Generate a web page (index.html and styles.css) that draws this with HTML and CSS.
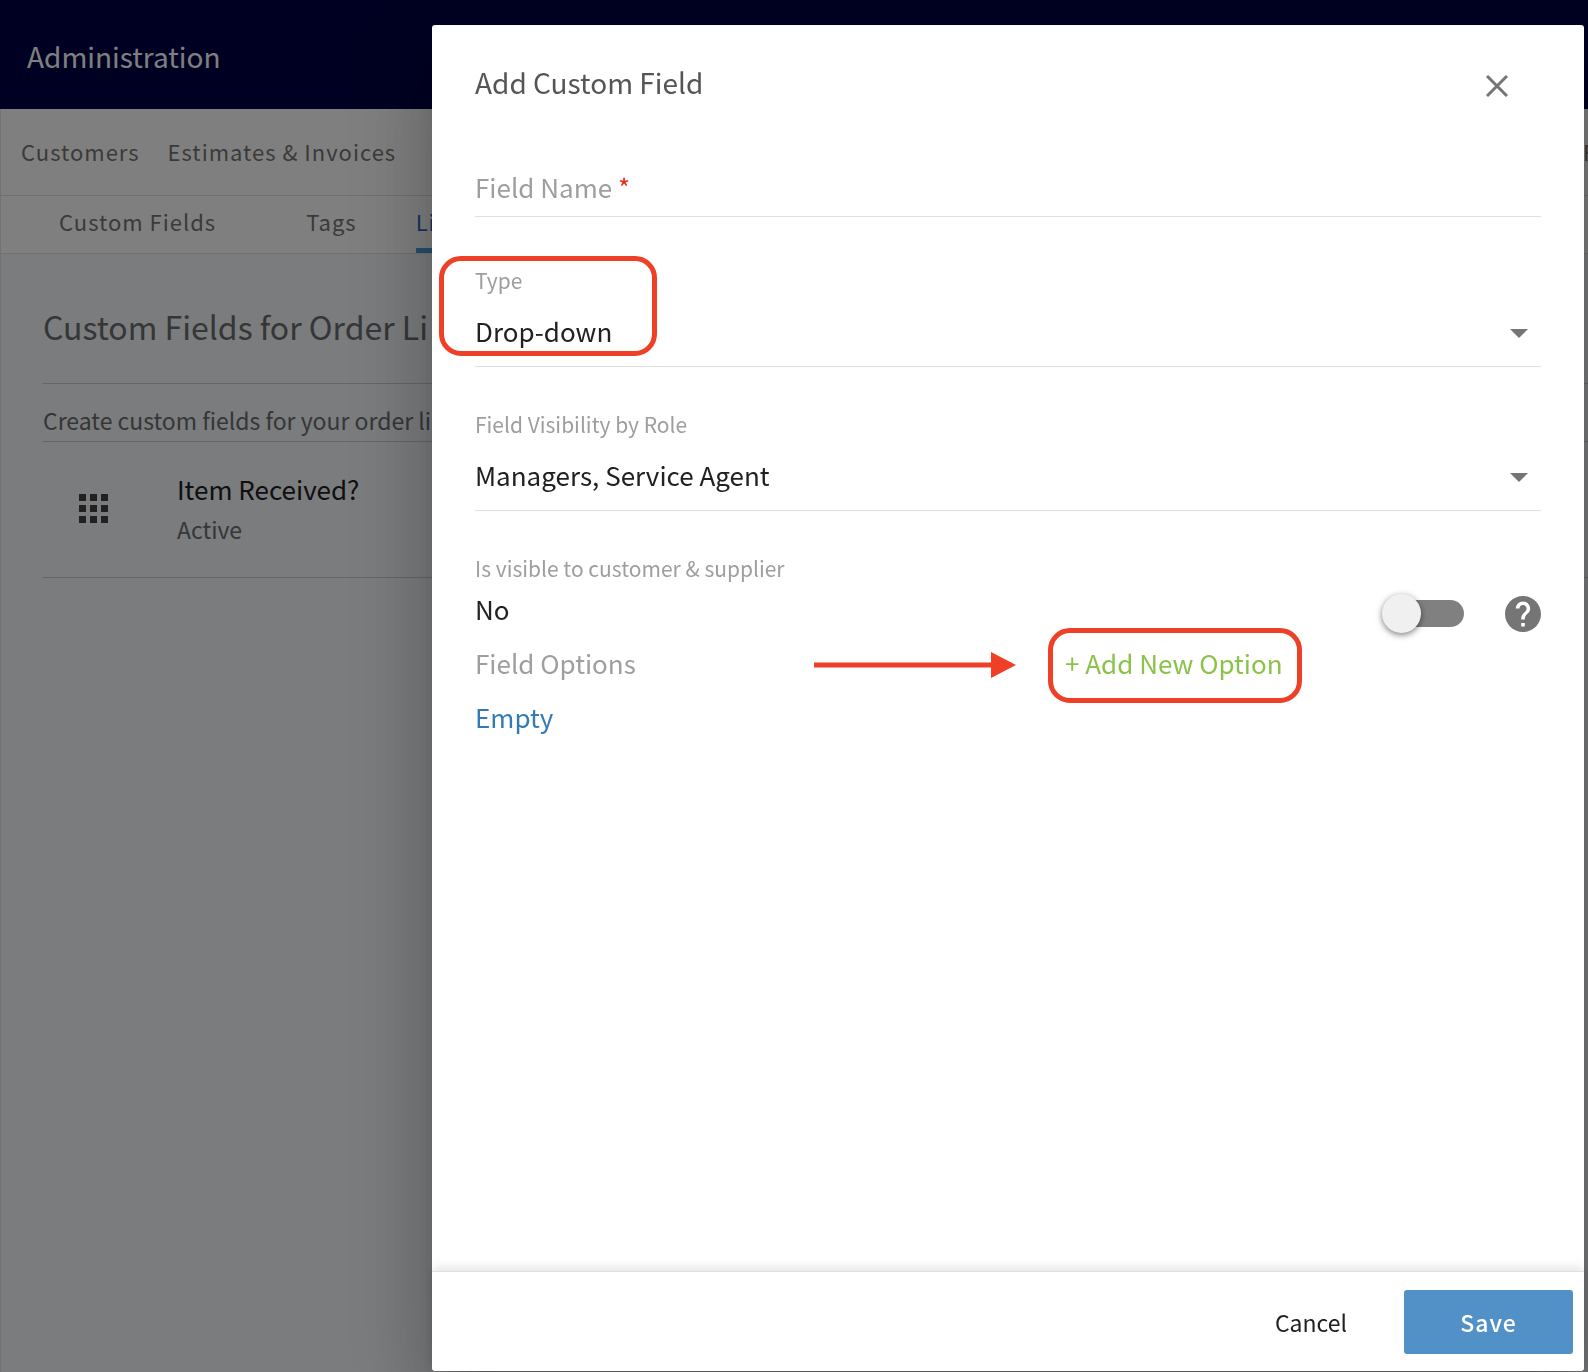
FILE: index.html
```
<!DOCTYPE html>
<html lang="en">
<head>
  <meta charset="UTF-8" />
  <title>Administration</title>
  <link rel="stylesheet" href="styles.css">
</head>
<body>

  <div class="page">
    <header class="topbar">
      <h1>Administration</h1>
    </header>

    <nav class="nav">
      <a href="#">Customers</a>
      <a href="#">Estimates &amp; Invoices</a>
      <a href="#" class="nav-last">F</a>
    </nav>

    <nav class="subnav">
      <a href="#">Custom Fields</a>
      <a href="#">Tags</a>
      <a href="#" class="active">Li</a>
    </nav>

    <main class="content">
      <h2>Custom Fields for Order Li</h2>
      <p class="intro">Create custom fields for your order li</p>
      <div class="item">
        <svg class="grip" viewBox="0 0 29 29" width="29" height="29">
          <path d="M0 0h7v7H0zM11 0h7v7h-7zM22 0h7v7h-7zM0 11h7v7H0zM11 11h7v7h-7zM22 11h7v7h-7zM0 22h7v7H0zM11 22h7v7h-7zM22 22h7v7h-7z" />
        </svg>
        <div>
          <div class="item-name">Item Received?</div>
          <div class="item-status">Active</div>
        </div>
      </div>
    </main>
  </div>

  <!-- Add custom field dialog -->
  <div class="backdrop">
    <form class="dialog" role="dialog" aria-labelledby="dialog-title">
      <div class="dialog-body">
        <div class="dialog-header">
          <h2 id="dialog-title">Add Custom Field</h2>
          <button type="button" class="close" aria-label="Close">
            <svg viewBox="0 0 22 22" width="22" height="22">
              <path d="M1 1l20 20M21 1L1 21" />
            </svg>
          </button>
        </div>

        <div class="field field-text">
          <label for="field-name">Field Name <span class="required">*</span></label>
          <input type="text" id="field-name" required>
        </div>

        <div class="field">
          <label for="field-type">Type</label>
          <select id="field-type">
            <option>Drop-down</option>
          </select>
          <svg class="caret" viewBox="0 0 18 9" width="18" height="9"><path d="M0 0h18L9 9z" /></svg>
          <span class="mark mark-type"></span>
        </div>

        <div class="field">
          <label for="field-roles">Field Visibility by Role</label>
          <select id="field-roles">
            <option>Managers, Service Agent</option>
          </select>
          <svg class="caret" viewBox="0 0 18 9" width="18" height="9"><path d="M0 0h18L9 9z" /></svg>
        </div>

        <div class="visible">
          <label for="field-visible">Is visible to customer &amp; supplier</label>
          <div class="visible-row">
            <span>No</span>
            <div class="visible-controls">
              <input type="checkbox" class="toggle" id="field-visible">
              <button type="button" class="help" aria-label="Help">
                <svg viewBox="2 2 20 20" width="36" height="36">
                  <path d="M12 2C6.48 2 2 6.48 2 12s4.48 10 10 10 10-4.480 10-10S17.520 2 12 2zm1 17h-2v-2h2v2zm2.070-7.750l-.9.920C13.450 12.900 13 13.500 13 15h-2v-.5c0-1.100.45-2.100 1.170-2.830l1.240-1.260c.37-.36.59-.86.59-1.410 0-1.100-.9-2-2-2s-2 .9-2 2H8c0-2.210 1.790-4 4-4s4 1.790 4 4c0 .88-.36 1.680-.93 2.250z" />
                </svg>
              </button>
            </div>
          </div>
        </div>

        <div class="options">
          <span class="options-label">Field Options</span>
          <div class="options-add">
            <svg class="arrow" viewBox="0 0 202 26" width="202" height="26">
              <path d="M0 10.500h178v5H0z" />
              <path d="M177 0l25 13-25 13z" />
            </svg>
            <button type="button" class="add">+ Add New Option</button>
            <span class="mark mark-add"></span>
          </div>
        </div>
        <a href="#" class="empty">Empty</a>
      </div>

      <div class="dialog-footer">
        <button type="button" class="cancel">Cancel</button>
        <button type="submit" class="save">Save</button>
      </div>
    </form>
  </div>

</body>
</html>
```
FILE: styles.css
```
* {
  box-sizing: border-box;
}
body {
  margin: 0;
  font-family: "Noto Sans CJK SC", "Open Sans", sans-serif;
  font-size: 26px;
  line-height: 40px;
  color: #212121;
  overflow: hidden;
}
h1, h2, p {
  margin: 0;
  font-weight: 400;
}
a {
  color: inherit;
  text-decoration: none;
}
button, input, select {
  font: inherit;
  color: inherit;
  border: 0;
  padding: 0;
  margin: 0;
  background: none;
}
button {
  cursor: pointer;
}

/* Page behind the dialog */
.page {
  display: flex;
  flex-direction: column;
  min-height: 100vh;
  background-color: #f5f8fa;
}
.topbar {
  height: 109px;
  padding: 36px 27px;
  background-color: #000044;
}
.topbar h1 {
  font-size: 28px;
  color: #fff;
}
.nav, .subnav {
  display: flex;
  background-color: #fff;
  border-bottom: 1px solid #dfe2e4;
  border-left: 1px solid #e4e6e8;
  font-size: 22px;
  letter-spacing: 1px;
  white-space: nowrap;
  color: #757575;
}
.nav {
  height: 87px;
  gap: 28px;
  padding: 22px 0 0 20px;
}
.nav-last {
  width: 5px;
  margin-left: auto;
}
.subnav {
  height: 58px;
  padding: 5px 0 0 58px;
}
.subnav a {
  margin-right: 90px;
}
.subnav a + a {
  margin-right: 59px;
}
.subnav .active {
  width: 160px;
  margin: 0;
  border-bottom: 5px solid #4a9fd8;
  color: #1f6fc0;
}
.content {
  flex: 1;
  padding: 42px 0 0 42px;
  border-left: 1px solid #e4e6e8;
  color: #6b6d6f;
  white-space: nowrap;
}
.content h2 {
  height: 88px;
  font-size: 32px;
  line-height: 60px;
  border-bottom: 1px solid #c9cccf;
}
.intro {
  height: 58px;
  padding-top: 16px;
  font-size: 23px;
  border-bottom: 1px solid #c9cccf;
}
.item {
  display: flex;
  align-items: center;
  gap: 69px;
  height: 136px;
  padding: 0 0 2px 36px;
  border-bottom: 1px solid #c9cccf;
}
.grip {
  fill: #424242;
}
.item-name {
  color: #212121;
}
.item-status {
  font-size: 23px;
}

/* Dialog */
.backdrop {
  position: fixed;
  inset: 0;
  display: flex;
  padding: 25px 4px 1px 432px;
  background-color: rgba(0,0,0,0.5);
}
.dialog {
  flex: 1;
  display: flex;
  flex-direction: column;
  background-color: #fff;
  border-radius: 3px;
  box-shadow: 0 22px 30px -14px rgba(0,0,0,0.2), 0 48px 76px 6px rgba(0,0,0,0.14), 0 18px 92px 16px rgba(0,0,0,0.12);
}
.dialog-body {
  flex: 1;
  padding: 37px 43px 0;
}
.dialog-header {
  display: flex;
  justify-content: space-between;
  margin-bottom: 65px;
}
.dialog-header h2 {
  font-size: 28px;
  color: #555;
}
.close {
  display: flex;
  align-items: center;
  height: 48px;
  padding: 0 33px;
}
.close svg {
  fill: none;
  stroke: #757575;
  stroke-width: 3;
}
.dialog-header .close {
  margin-bottom: -8px;
}
.field {
  position: relative;
  margin-bottom: 42px;
}
.field label, .visible label {
  display: block;
  font-size: 21px;
  line-height: 30px;
  color: #9e9e9e;
}
.field input, .field select {
  display: block;
  width: 100%;
  border-bottom: 1px solid #e0e0e0;
  border-radius: 0;
  outline: none;
}
.field select {
  appearance: none;
  height: 72px;
}
.field-text {
  margin-bottom: 48px;
}
.field-text input {
  height: 50px;
}
.field-text label {
  position: absolute;
  top: 0;
  left: 0;
  font-size: 26px;
  line-height: 40px;
}
.required {
  color: #f0281e;
}
.caret {
  position: absolute;
  right: 13px;
  bottom: 29px;
  fill: #757575;
  pointer-events: none;
}
.visible {
  margin-bottom: 10px;
}
.visible-row {
  display: flex;
  justify-content: space-between;
  height: 44px;
  margin-top: 6px;
}
.visible-controls {
  display: flex;
  align-items: center;
  align-self: flex-end;
  gap: 41px;
}
.toggle {
  appearance: none;
  position: relative;
  width: 82px;
  height: 39px;
}
.toggle::before {
  content: "";
  position: absolute;
  inset: 6px 0 6px 6px;
  border-radius: 14px;
  background-color: #808080;
}
.toggle::after {
  content: "";
  position: absolute;
  top: 0;
  left: 0;
  width: 39px;
  height: 39px;
  border-radius: 50%;
  background-color: #f0f0f0;
  box-shadow: 0 2px 6px rgba(0,0,0,0.5);
}
.help {
  display: flex;
}
.help svg {
  fill: #757575;
}
.options {
  display: grid;
  grid-template-columns: 590px 1fr;
  margin-bottom: 14px;
}
.options-label {
  color: #9e9e9e;
}
.options-add {
  position: relative;
  justify-self: start;
}
.add {
  display: block;
  color: #8bc34a;
}
.empty {
  color: #337ab7;
}

/* Red highlights */
.mark {
  position: absolute;
  border: 5px solid #ee4026;
  border-radius: 22px;
  pointer-events: none;
}
.mark-type {
  top: -9px;
  left: -36px;
  width: 218px;
  height: 100px;
}
.mark-add {
  inset: -15px -19px -20px -17px;
}
.arrow {
  position: absolute;
  top: 9px;
  right: calc(100% + 49px);
  fill: #ee4026;
}

.dialog-footer {
  display: flex;
  justify-content: flex-end;
  gap: 57px;
  padding: 18px 11px 17px;
  border-top: 1px solid #e0e0e0;
  box-shadow: 0 -4px 10px rgba(0,0,0,0.1);
  font-size: 23px;
}
.save {
  width: 169px;
  height: 64px;
  border-radius: 3px;
  background-color: #5191c7;
  color: #fff;
  font-weight: 500;
  letter-spacing: 1px;
}
```
